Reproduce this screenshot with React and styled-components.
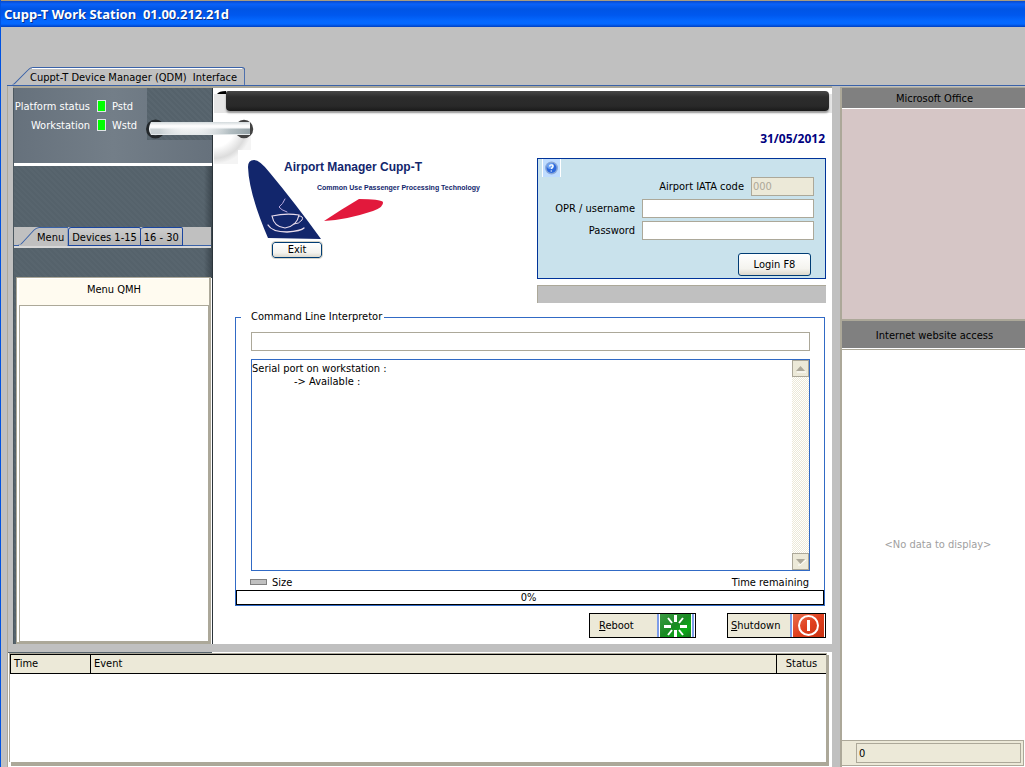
import React from "react";
import styled, { createGlobalStyle } from "styled-components";

const c = {
  gray: "#c0c0c0",
  tan: "#aca899",
  beige: "#ece9d8",
  line: "#316ac5",
  edge: "#3a62a8",
  navy: "#12266c",
  slate: "#56636c",
};

const Global = createGlobalStyle`
  * { box-sizing: border-box; }
  body {
    margin: 0;
    background: ${c.gray};
    color: #000;
    font: 11px/14px "DejaVu Sans Condensed", "DejaVu Sans", sans-serif;
  }
  button, input, textarea { font: inherit; color: inherit; margin: 0; border-radius: 0; }
`;

const Window = styled.div`
  min-height: 100vh;
  display: flex;
  flex-direction: column;
  border-left: 1px solid #0052e0;
`;

const TitleBar = styled.header`
  height: 27px;
  padding: 2px 3px 0;
  border-top: 1px solid #a89c80;
  background: linear-gradient(#0a48c8, #0a62f8 3px, #0055e5 8px, #0058ee 14px, #0468ff 20px, #0468ff 23px, #003fc0 26px);
  h1 {
    margin: 0;
    color: #fff;
    font: bold 13px/22px "Noto Sans", sans-serif;
    white-space: pre;
    text-shadow: 1px 1px #0a2f86;
  }
`;

const TabStrip = styled.nav`
  display: flex;
  align-items: flex-end;
  height: 59px;
  margin-left: 6px;
  border-bottom: 1px solid ${c.edge};
`;

const MainTab = styled.button`
  position: relative;
  height: 19px;
  margin: 0 0 -1px 4px;
  padding: 3px 8px 0 19px;
  border: 0;
  background: none;
  white-space: pre;
`;

const TabShape = styled.svg`
  position: absolute;
  inset: 0;
  width: 100%;
  height: 100%;
  z-index: -1;
`;

const Workspace = styled.div`
  flex: 1;
  display: flex;
  padding-left: 6px;
`;

const Left = styled.div`
  flex: 1;
  min-width: 0;
  display: flex;
  flex-direction: column;
  border-left: 1px solid ${c.tan};
`;

const Upper = styled.div`
  flex: 1;
  display: flex;
  margin-left: 5px;
  border-top: 2px solid ${c.tan};
`;

const Sidebar = styled.aside`
  width: 200px;
  display: flex;
  flex-direction: column;
  border-left: 1px solid #4c5860;
  border-right: 1px solid #2b343a;
  background:
    linear-gradient(90deg, transparent 190px, rgba(20, 28, 34, 0.4)),
    repeating-linear-gradient(45deg, #55626b 0 2px, #58656e 2px 4px);
`;

const StatusPanel = styled.section`
  display: flex;
  justify-content: space-between;
  height: 78px;
  border-bottom: 3px solid #fff;
  background: linear-gradient(90deg, #66717c, #737e88 50%, #66717c);
`;

const StatusGrid = styled.dl`
  display: grid;
  grid-template-columns: 76px 9px auto;
  grid-auto-rows: 19px;
  column-gap: 6px;
  margin: 12px 0 0;
  color: #fff;
  dt { justify-self: end; white-space: nowrap; }
  dd { margin: 0 0 0 1px; }
`;

const Lamp = styled.i`
  width: 9px;
  height: 12px;
  border: 1px solid #dfe3e6;
  background: #00ff00;
`;

const Weave = styled.div`
  width: 65px;
  height: 52px;
  background: repeating-linear-gradient(45deg, #55626b 0 2px, #59666f 2px 4px);
`;

const SideTabs = styled.nav`
  display: flex;
  align-items: flex-end;
  height: 21px;
  margin: 61px 1px 0 0;
  padding-bottom: 2px;
  background: linear-gradient(${c.gray} 18px, ${c.edge} 18px 19px, #d8d8d8 19px);
`;

const SideTab = styled.button`
  position: relative;
  height: 19px;
  padding: 2px 3px 0;
  border: 1px solid #1b46a0;
  border-left-width: ${(p) => (p.$first ? "1px" : "0")};
  border-radius: 3px 2px 0 0;
  background: linear-gradient(#cdcdcd, #b4b4b4);
  white-space: nowrap;
`;

const CurrentTab = styled.button`
  position: relative;
  z-index: 1;
  height: 19px;
  padding: 3px 4px 0 23px;
  border: 0;
  background: none;
`;

const MenuPanel = styled.section`
  flex: 1;
  display: flex;
  flex-direction: column;
  margin: 29px 1px 0 2px;
  padding: 1px 0 0 2px;
  border: solid ${c.tan};
  border-width: 1px 2px 2px 1px;
  background: #fff;
  box-shadow: 1px 1px #fff;
  h2 {
    margin: 0;
    height: 26px;
    padding-top: 4px;
    font: inherit;
    text-align: center;
    background: #fffbf0;
  }
`;

const MenuList = styled.div`
  flex: 1;
  border: 1px solid ${c.tan};
`;

const Main = styled.main`
  position: relative;
  flex: 1;
  min-width: 0;
  display: flex;
  flex-direction: column;
  padding: 0 6px 6px 22px;
  background: #fff;
`;

const Banner = styled.div`
  height: 27px;
  margin: 0 -6px 0 -21px;
  padding: 3px 3px 0 12px;
  background: linear-gradient(#fff 6px, #e6e6e6 6px 25px, #fff 25px);
  div {
    height: 20px;
    border-radius: 2px 4px 4px 4px;
    background: linear-gradient(#474747, #2c2c2c 6px, #292929 15px, #1a1a1a);
    box-shadow: 0 2px 2px #999;
  }
`;

const Rings = styled.svg`
  position: absolute;
  left: -72px;
  top: 0;
  width: 116px;
  height: 76px;
`;

const Intro = styled.div`
  display: flex;
  justify-content: space-between;
  margin-bottom: 7px;
`;

const Brand = styled.div`
  display: flex;
  flex-direction: column;
  align-items: flex-start;
  padding: 44px 0 0 13px;
`;

const XpButton = styled.button`
  display: flex;
  align-items: center;
  justify-content: center;
  width: ${(p) => p.$w}px;
  height: ${(p) => p.$h}px;
  padding: 0;
  border: 1px solid #003c74;
  border-radius: 3px;
  background: linear-gradient(#fff, #f4f3ee 70%, #dcd8cc);
`;

const ExitButton = styled(XpButton)`
  margin: 2px 0 0 24px;
  outline: 1px solid #d8d5c8;
`;

const Side = styled.div`
  width: 289px;
`;

const DateText = styled.time`
  display: block;
  padding: 15px 1px 10px 0;
  text-align: right;
  color: #000080;
  font: bold 12px/18px "Noto Sans", sans-serif;
`;

const Login = styled.form`
  display: grid;
  grid-template-columns: 99px 109px 63px;
  height: 121px;
  padding-left: 5px;
  grid-template-rows: 18px 22px 22px auto;
  border: 1px solid #003399;
  background: #c9e2ec;
  label { justify-self: end; padding: 3px 7px 0 0; white-space: nowrap; }
  input {
    width: 100%;
    height: 19px;
    padding: 0 1px;
    border: 1px solid ${c.tan};
    background: #fff;
  }
  input:disabled { color: #aca899; background: ${c.beige}; }
`;

const HelpButton = styled.button`
  grid-column: 1 / -1;
  width: 17px;
  height: 18px;
  padding: 0;
  border: 0;
  background: #bfdcff;
  box-shadow: -1px 0 #fff, 1px 0 #fff;
`;

const Wide = styled.div`
  grid-column: 2 / 4;
`;

const IataLabel = styled.label`
  grid-column: 1 / 3;
`;

const LoginButton = styled(XpButton)`
  grid-column: 2 / 4;
  justify-self: end;
  align-self: start;
  margin: 11px 3px 0 0;
`;

const MessageBar = styled.div`
  height: 18px;
  margin-top: 6px;
  border-top: 1px solid ${c.tan};
  border-left: 1px solid ${c.tan};
  background: ${c.gray};
`;

const Cli = styled.fieldset`
  flex: 1;
  min-width: 0;
  display: flex;
  flex-direction: column;
  margin: 0 1px 0 0;
  padding: 8px 0 0;
  border: 1px solid ${c.line};
  legend { margin-left: 5px; padding: 0 2px 0 10px; }
`;

const Command = styled.input`
  height: 19px;
  margin: 0 14px 8px 15px !important;
  padding: 0 2px;
  border: 1px solid ${c.tan};
  background: #fff;
`;

const Output = styled.div`
  flex: 1;
  display: flex;
  margin: 0 14px 0 15px;
  border: 1px solid ${c.line};
  textarea {
    flex: 1;
    min-width: 0;
    padding: 2px 0 0;
    border: 0;
    resize: none;
    outline: 0;
    overflow: hidden;
    line-height: 13px;
    tab-size: 42px;
    background: #fff;
  }
`;

const Scrollbar = styled.div`
  display: flex;
  flex-direction: column;
  justify-content: space-between;
  width: 17px;
  background: repeating-conic-gradient(${c.beige} 0 25%, #fff 0 50%) 0 0 / 2px 2px;
`;

const Arrow = styled.button`
  display: block;
  width: 17px;
  height: 17px;
  padding: 0;
  border: 1px solid ${c.tan};
  background: ${c.beige};
  svg { display: block; }
`;

const TransferRow = styled.div`
  display: flex;
  align-items: center;
  height: 19px;
  padding: 4px 15px 0 14px;
  i { width: 17px; height: 6px; margin: 0 5px 2px 0; border: 1px solid #808080; background: ${c.gray}; }
  span:last-child { margin-left: auto; }
`;

const ProgressBar = styled.div`
  height: 15px;
  padding-right: 3px;
  border: 1px solid #000;
  line-height: 14px;
  text-align: center;
`;

const Power = styled.div`
  display: flex;
  justify-content: flex-end;
  gap: 31px;
  margin-top: 7px;
`;

const PowerButton = styled.button`
  display: flex;
  align-items: stretch;
  justify-content: space-between;
  width: ${(p) => p.$w}px;
  height: 25px;
  padding: 0 0 0 ${(p) => p.$pad}px;
  border: 1px solid #000;
  background: ${c.beige};
  line-height: 23px;
  svg { display: block; }
`;

const Divider = styled.div`
  height: 8px;
  background: ${c.gray};
`;

const Events = styled.section`
  height: 115px;
  padding: 1px 5px 5px 1px;
  background:
    linear-gradient(90deg, ${c.slate} 204px, transparent 204px) 0 0 / 100% 1px no-repeat,
    #fff;
`;

const EventBox = styled.div`
  height: 109px;
  border-top: 1px solid ${c.tan};
  border-left: 1px solid ${c.tan};
  border-right: 1px solid ${c.tan};
  box-shadow: 2px 2px ${c.tan}, 2px 4px ${c.tan};
  background: #fff;
`;

const EventTable = styled.table`
  width: 100%;
  table-layout: fixed;
  border-spacing: 0;
  th {
    height: 20px;
    padding: 0 0 0 3px;
    border: solid #000;
    border-width: 1px 1px 1px 0;
    background: ${c.beige};
    font-weight: normal;
    text-align: left;
  }
  th:first-child { width: 81px; border-left: 1px solid #000; }
  th:last-child { width: 49px; padding: 0; border-right: 0; text-align: center; }
`;

const Splitter = styled.div`
  width: 8px;
  background: ${c.gray};
`;

const Right = styled.aside`
  width: 185px;
  display: flex;
  flex-direction: column;
  margin-top: 1px;
  border-top: 1px solid ${c.tan};
  border-left: 2px solid ${c.tan};
  background: #fff;
`;

const PaneTitle = styled.h2`
  margin: 0;
  height: ${(p) => p.$h}px;
  padding: 1px 0 0 2px;
  font: inherit;
  line-height: ${(p) => p.$h}px;
  text-align: center;
  background: #808080;
`;

const OfficePane = styled.div`
  height: 213px;
  border-top: 1px solid #fff;
  border-bottom: 2px solid ${c.tan};
  background: #d6c6c6;
`;

const WebPane = styled.div`
  flex: 1;
  display: flex;
  align-items: center;
  justify-content: center;
  margin-top: 1px;
  padding-left: 9px;
  border-top: 1px solid ${c.tan};
  color: #a0a0a0;
`;

const Footer = styled.footer`
  padding: 2px 2px 2px 14px;
  margin: 0 1px 1px 0;
  border: 1px solid ${c.tan};
  border-left: 0;
  background: ${c.beige};
  input {
    display: block;
    width: 100%;
    height: 20px;
    padding: 0 2px;
    border: 1px solid ${c.tan};
    background: transparent;
  }
`;

const Logo = () => (
  <svg width="240" height="81" viewBox="0 0 240 81" role="img" aria-label="Airport Manager Cupp-T">
    <path d="M0 8Q0 1 6 1Q12 1 22 14Q47 44 73 80L20 79Q1 35 0 8Z" fill={c.navy} />
    <path d="M76 62Q94 50 111 40Q132 40 135 43Q136 48 125 52Q98 61 76 62Z" fill="#e2193c" />
    <g fill="none" stroke="#e9dcec" strokeLinecap="round">
      <path d="M24 57Q38 54 51 56Q49 67 37 69Q26 68 24 57Z" strokeWidth="1.2" />
      <path d="M51 57Q56 57 54 61Q51 65 46 65" />
      <path d="M20 66Q24 73 39 73Q53 72 56 69" strokeWidth="1.3" />
      <path d="M37 40Q35 45 31 48Q33 51 39 53" stroke="#b9a9e0" />
    </g>
    <text x="36" y="12" fill={c.navy} fontFamily="Liberation Sans" fontWeight="bold" fontSize="12">Airport Manager Cupp-T</text>
    <text x="69" y="31" fill={c.navy} fontFamily="Liberation Sans" fontWeight="bold" fontSize="7">Common Use Passenger Processing Technology</text>
  </svg>
);

const RingArt = () => (
  <Rings viewBox="141 88 116 76" aria-hidden="true">
    <defs>
      <linearGradient id="rod" x1="0" y1="0" x2="0" y2="1">
        <stop offset="0" stopColor="#d3dadc" />
        <stop offset="0.3" stopColor="#fff" />
        <stop offset="0.6" stopColor="#eef1f2" />
        <stop offset="1" stopColor="#e3e8ea" />
      </linearGradient>
      <linearGradient id="glint">
        <stop offset="0.1" stopColor="#a9b5b9" stopOpacity="0.5" />
        <stop offset="0.4" stopColor="#fff" stopOpacity="0" />
        <stop offset="0.8" stopColor="#8d9da3" stopOpacity="0.6" />
        <stop offset="1" stopColor="#7d8d93" stopOpacity="0.8" />
      </linearGradient>
      <radialGradient id="shade" gradientUnits="userSpaceOnUse" cx="214" cy="126" r="38">
        <stop offset="0.55" stopColor="#fff" />
        <stop offset="0.85" stopColor="#dcdcdc" />
        <stop offset="1" stopColor="#f4f4f4" />
      </radialGradient>
    </defs>
    <path d="M214 130H251V150H238V164H214Z" fill="url(#shade)" />
    <path d="M217 94Q219 91 226 91V94Z" fill="#000" />
    <circle cx="155.500" cy="129" r="8" fill="none" stroke="#23282b" strokeWidth="3" />
    <circle cx="244" cy="129" r="7.500" fill="none" stroke="#444" strokeWidth="3.500" />
    <path d="M151 122H250V135H151Q147 129 151 122Z" fill="url(#rod)" />
    <path d="M150 128.500H250V134H151Z" fill="url(#glint)" />
  </Rings>
);

const HelpIcon = () => (
  <svg width="17" height="18" viewBox="0 0 17 18" aria-hidden="true">
    <circle cx="8.500" cy="9" r="6.500" fill="#8aa8d8" />
    <circle cx="8.500" cy="9" r="5" fill="#2d68dc" />
    <ellipse cx="7.500" cy="7" rx="3.500" ry="3" fill="#6fa4f2" />
    <path d="M6.500 7.500Q7 5.500 9 6Q11 7 9 8.700L8.500 10M8.300 11.500V12.500" fill="none" stroke="#fff" strokeWidth="1.400" />
  </svg>
);

const RebootIcon = () => (
  <svg width="38" height="23" viewBox="0 0 38 23" aria-hidden="true">
    <defs>
      <linearGradient id="green" x1="0" y1="0" x2="1" y2="1">
        <stop offset="0" stopColor="#3d9b45" /><stop offset="0.5" stopColor="#198a22" /><stop offset="0.75" stopColor="#0cab18" /><stop offset="1" stopColor="#187420" />
      </linearGradient>
    </defs>
    <rect width="38" height="23" fill="#fff" />
    <path d="M1 0V23M36 0V23" stroke="#7d9ce8" strokeWidth="2" />
    <rect x="3" width="31" height="23" fill="url(#green)" />
    <g stroke="#fff">
      <path d="M18.500 1V8M18.500 16V23M7 12.500H14M23 12.500H30" strokeWidth="3" />
      <path d="M11 4L15 9M26 4L22 9M11 21L15 16M26 21L22 16" strokeWidth="2" />
    </g>
  </svg>
);

const ShutdownIcon = () => (
  <svg width="35" height="23" viewBox="0 0 35 23" aria-hidden="true">
    <defs>
      <linearGradient id="red" x1="0" y1="0" x2="1" y2="1">
        <stop offset="0" stopColor="#e8714f" /><stop offset="0.5" stopColor="#e0401f" /><stop offset="1" stopColor="#c8300f" />
      </linearGradient>
    </defs>
    <rect width="35" height="23" fill="#fff" />
    <path d="M1 0V23" stroke="#7d9ce8" strokeWidth="2" />
    <rect x="3" width="31" height="23" fill="url(#red)" />
    <circle cx="18.500" cy="11.500" r="9.500" fill="none" stroke="#fff" strokeWidth="2" />
    <path d="M18.500 6V17" stroke="#fff" strokeWidth="3" />
  </svg>
);

const ScrollArrow = ({ label, down }) => (
  <Arrow type="button" aria-label={label}>
    <svg width="15" height="15" viewBox="0 0 15 15" aria-hidden="true">
      <path d={down ? "M5 11H7L13 6" : "M4 11H13"} fill="none" stroke="#fff" />
      <path d={down ? "M3 5H12L7.500 10Z" : "M3 10H12L7.500 5Z"} fill={c.tan} />
    </svg>
  </Arrow>
);

export default function App() {
  return (
    <Window>
      <Global />
      <TitleBar><h1>{"Cupp-T Work Station  01.00.212.21d"}</h1></TitleBar>
      <TabStrip>
        <MainTab type="button">
          <TabShape viewBox="0 0 234 19" preserveAspectRatio="none">
            <path d="M0 19L3 17L17 3Q19 0.500 22 0.500H231Q233.500 0.500 233.500 3V19Z" fill={c.gray} stroke={c.edge} />
            <path d="M21 1.500H231" stroke="#fff" />
            <path d="M0 18.500H233" stroke={c.gray} strokeWidth="2" />
          </TabShape>
          {"Cuppt-T Device Manager (QDM)  Interface"}
        </MainTab>
      </TabStrip>
      <Workspace>
        <Left>
          <Upper>
            <Sidebar>
              <StatusPanel>
                <StatusGrid>
                  <dt>Platform status</dt><Lamp as="dd" /><dd>Pstd</dd>
                  <dt>Workstation</dt><Lamp as="dd" /><dd>Wstd</dd>
                </StatusGrid>
                <Weave />
              </StatusPanel>
              <SideTabs>
                <CurrentTab type="button">
                  <TabShape viewBox="0 0 54 19" preserveAspectRatio="none">
                    <path d="M4 18.500Q7 18 9 15L20 3Q22 1 25 0.500H54V19Z" fill={c.gray} stroke={c.edge} />
                    <path d="M5 18.500H53" stroke={c.gray} strokeWidth="2" />
                  </TabShape>
                  Menu
                </CurrentTab>
                <SideTab type="button" $first>Devices 1-15</SideTab>
                <SideTab type="button">16 - 30</SideTab>
              </SideTabs>
              <MenuPanel>
                <h2>Menu QMH</h2>
                <MenuList />
              </MenuPanel>
            </Sidebar>
            <Main>
              <Banner><div /></Banner>
              <RingArt />
              <Intro>
                <Brand>
                  <Logo />
                  <ExitButton type="button" $w={50} $h={16}>Exit</ExitButton>
                </Brand>
                <Side>
                  <DateText dateTime="2012-05-31">31/05/2012</DateText>
                  <Login onSubmit={(e) => e.preventDefault()}>
                    <HelpButton type="button" aria-label="Help"><HelpIcon /></HelpButton>
                    <IataLabel htmlFor="iata">Airport IATA code</IataLabel>
                    <input id="iata" defaultValue="000" disabled />
                    <label htmlFor="user">OPR / username</label>
                    <Wide><input id="user" /></Wide>
                    <label htmlFor="pass">Password</label>
                    <Wide><input id="pass" type="password" /></Wide>
                    <LoginButton type="submit" $w={73} $h={23}>Login F8</LoginButton>
                  </Login>
                  <MessageBar />
                </Side>
              </Intro>
              <Cli>
                <legend>Command Line Interpretor</legend>
                <Command aria-label="Command" />
                <Output>
                  <textarea aria-label="Output" readOnly defaultValue={"Serial port on workstation :\n\t-> Available :"} />
                  <Scrollbar>
                    <ScrollArrow label="Scroll up" />
                    <ScrollArrow label="Scroll down" down />
                  </Scrollbar>
                </Output>
                <TransferRow><i /><span>Size</span><span>Time remaining</span></TransferRow>
                <ProgressBar role="progressbar" aria-valuenow={0}>0%</ProgressBar>
              </Cli>
              <Power>
                <PowerButton type="button" $w={107} $pad={9}><span><u>R</u>eboot</span><RebootIcon /></PowerButton>
                <PowerButton type="button" $w={99} $pad={3}><span><u>S</u>hutdown</span><ShutdownIcon /></PowerButton>
              </Power>
            </Main>
          </Upper>
          <Divider />
          <Events>
            <EventBox>
              <EventTable>
                <thead><tr><th>Time</th><th>Event</th><th>Status</th></tr></thead>
                <tbody />
              </EventTable>
            </EventBox>
          </Events>
        </Left>
        <Splitter />
        <Right>
          <PaneTitle $h={20}>Microsoft Office</PaneTitle>
          <OfficePane />
          <PaneTitle $h={27}>Internet website access</PaneTitle>
          <WebPane>&lt;No data to display&gt;</WebPane>
          <Footer><input aria-label="Count" defaultValue="0" /></Footer>
        </Right>
      </Workspace>
    </Window>
  );
}
